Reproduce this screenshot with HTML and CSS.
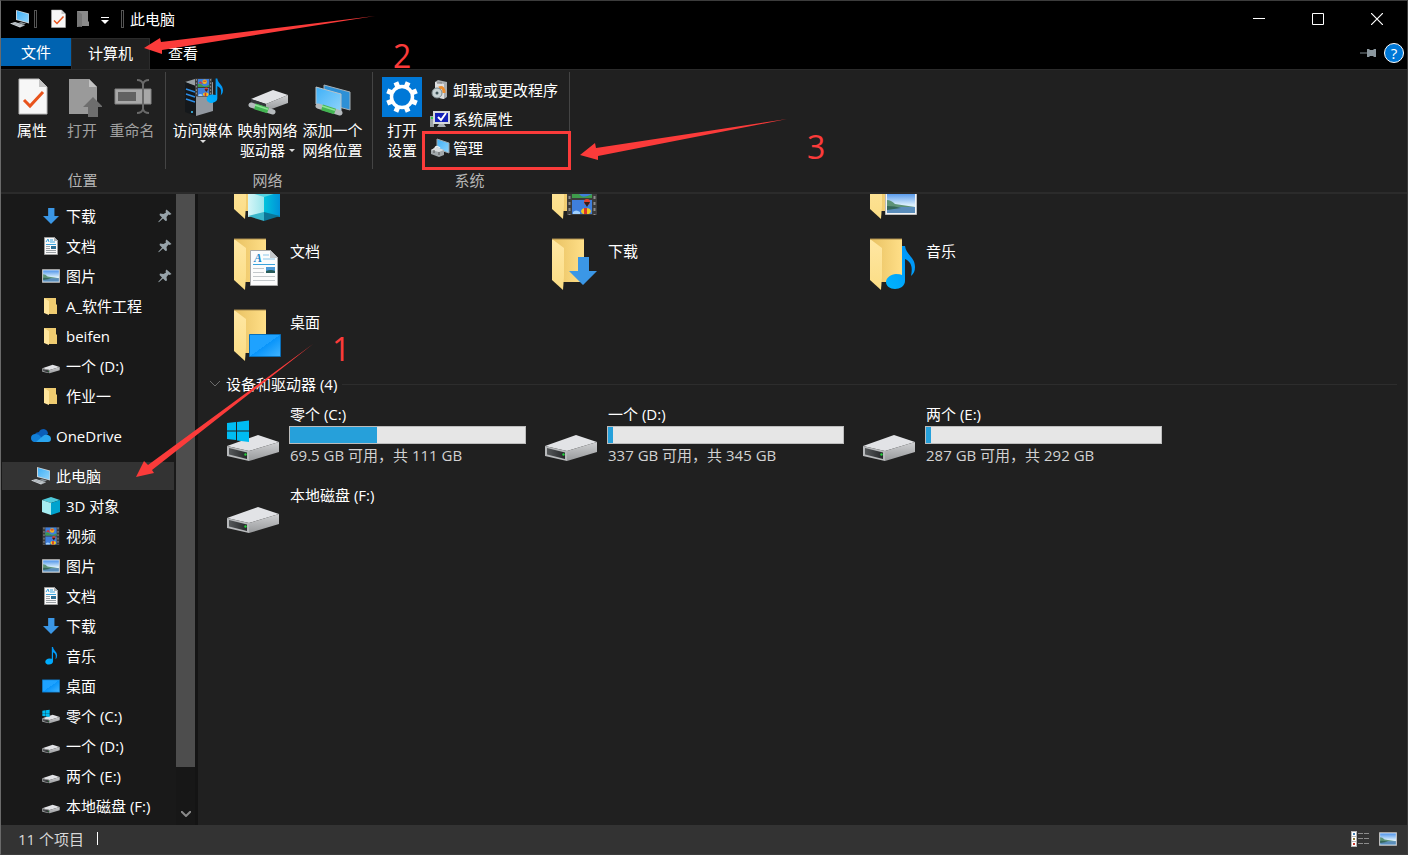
FILE: index.html
```
<!DOCTYPE html>
<html lang="zh-CN">

<head>
    <meta charset="UTF-8">
    <meta name="viewport" content="width=device-width, initial-scale=1.0">
    <title>此电脑</title>
    <link rel="stylesheet" href="styles.css">
</head>

<body>
    <!-- shared icons -->
    <svg class="sprite" aria-hidden="true">
        <defs>
            <linearGradient id="gScreen" x1="0" y1="0" x2="1" y2="1">
                <stop offset="0" stop-color="#3fb0f7" />
                <stop offset="1" stop-color="#8fd3fb" />
            </linearGradient>
            <linearGradient id="gBack" x1="0" y1="0" x2="1" y2="0">
                <stop offset="0" stop-color="#e8c162" />
                <stop offset="1" stop-color="#ffdf88" />
            </linearGradient>
            <linearGradient id="gFlap" x1="0" y1="0" x2="0" y2="1">
                <stop offset="0" stop-color="#ffe7a3" />
                <stop offset="1" stop-color="#fbdd85" />
            </linearGradient>
            <linearGradient id="gDesk" x1="0" y1="0" x2="1" y2="1">
                <stop offset="0.5" stop-color="#1ea2ff" />
                <stop offset="0.5" stop-color="#0894fa" />
                <stop offset="1" stop-color="#41b4ff" />
            </linearGradient>
            <linearGradient id="gSky" x1="0" y1="0" x2="0" y2="1">
                <stop offset="0" stop-color="#4f94ea" />
                <stop offset="0.6" stop-color="#dbeffc" />
                <stop offset="1" stop-color="#dbeffc" />
            </linearGradient>
            <linearGradient id="gNote" x1="0" y1="1" x2="1" y2="0">
                <stop offset="0" stop-color="#00b4ff" />
                <stop offset="1" stop-color="#0090f5" />
            </linearGradient>
            <linearGradient id="gDark" x1="0" y1="0" x2="1" y2="0">
                <stop offset="0" stop-color="#55585a" />
                <stop offset="1" stop-color="#26282a" />
            </linearGradient>
            <linearGradient id="gSide" x1="0" y1="0" x2="0" y2="1">
                <stop offset="0" stop-color="#cfd0d2" />
                <stop offset="1" stop-color="#97999b" />
            </linearGradient>
            <linearGradient id="gCubeL" x1="0" y1="0" x2="1" y2="0">
                <stop offset="0" stop-color="#d6f6f8" />
                <stop offset="1" stop-color="#9be6ec" />
            </linearGradient>
            <linearGradient id="gCubeR" x1="0" y1="0" x2="1" y2="0">
                <stop offset="0" stop-color="#00c3dd" />
                <stop offset="1" stop-color="#0091d8" />
            </linearGradient>
        </defs>

        <symbol id="pc" viewBox="0 0 20 20">
            <path d="M6 1l13 3.500v10L6 11z" fill="#c9d2d8" />
            <path d="M7 2l11.500 3.200v8.300L7 10.300z" fill="url(#gScreen)" />
            <path d="M11 13l5 1.500-2 1-6-1.500z" fill="#8b959b" />
            <path d="M0 14.500l5-1.500 10 3.200-5 2.300z" fill="#d7dce0" />
            <path d="M2 14.500l10 3M4 13.800l10 3" stroke="#7d868c" stroke-width=".5" />
        </symbol>

        <symbol id="check-page" viewBox="0 0 40 40">
            <path d="M7 2h20l8 8v27H7z" fill="#f7f7f7" stroke="#b9b9b9" />
            <path d="M27 2v8h8z" fill="#c5c5c5" />
            <path d="M12 23l6 6 13-14" fill="none" stroke="#e8531c" stroke-width="3" />
        </symbol>

        <symbol id="open-page" viewBox="0 0 40 40">
            <path d="M7 2h20l8 8v27H7z" fill="#9a9a9a" />
            <path d="M27 2v8h8z" fill="#c2c2c2" />
            <path d="M31 20l10 10h-5v10H26V30h-5z" fill="#6e6e6e" />
        </symbol>

        <symbol id="rename" viewBox="0 0 40 40">
            <path d="M3 12h36v15H3z" fill="#a8a8a8" stroke="#838383" />
            <path d="M6 15h18v9H6z" fill="#626262" />
            <path d="M31 6v27M25 3q5 0 6 4q1-4 6-4M25 36q5 0 6-4q1 4 6 4" fill="none" stroke="#6a6a6a" stroke-width="2" />
        </symbol>

        <symbol id="folder-gray" viewBox="0 0 14 18">
            <path d="M1 1h11v10l1 1v4H6L1 17z" fill="#8a8a8a" />
            <path d="M1 1l5 3v13l-5-1z" fill="#787878" />
        </symbol>

        <symbol id="film" viewBox="0 0 30 32">
            <path d="M0 0h30v32H0z" fill="#3b3b3b" />
            <path d="M2.500 1v31M27.500 1v31" stroke="#8c8c8c" stroke-width="2" stroke-dasharray="3 3" />
            <path d="M5 1h20v14H5zM5 17h20v14H5z" fill="#3f7fdc" />
            <path d="M5 10q5-2 8 2t12-1v4H5z" fill="#3f9b4b" />
            <circle cx="17" cy="6" r="4" fill="#f2b51d" />
            <path d="M14 4h6l-1 2h-4zM6 8l4-3 4 5z" fill="#d23b3b" />
            <circle cx="20" cy="19" r="3" fill="#e4402c" />
            <path d="M17 19h6l-3 5z" fill="#31201f" />
            <path d="M14 29q0-4 5-4t5 4l-2 2h-6z" fill="#f0c91f" />
            <path d="M17 25h3v6h-3z" fill="#d9362a" />
            <path d="M6 29q3-3 7 0v2H6z" fill="#9fd0ff" />
        </symbol>

        <symbol id="note" viewBox="0 0 30 44">
            <path d="M17 0h3c1 9 10 11 10 21q0 6-4 9c2-10 0-14-6-17v22c0 5-5 8-10 8S1 40 1 36s5-8 10-8q4 0 6 1z" fill="url(#gNote)" />
        </symbol>

        <symbol id="photo" viewBox="0 0 32 24">
            <path d="M.5.5h31v23H.5z" fill="#f4f4f4" stroke="#bdbdbd" />
            <path d="M2 2h28v20H2z" fill="url(#gSky)" />
            <path d="M2 9q4 0 8 4l20 3v1H2z" fill="#5d9377" />
            <path d="M2 16h28v6H2z" fill="#5a8dba" />
            <path d="M2 15q8 0 14 2l-14 2z" fill="#34675a" />
        </symbol>

        <symbol id="doc" viewBox="0 0 28 36">
            <path d="M.5.5h20l7 7v28H.5z" fill="#fcfcfc" stroke="#a9a9a9" />
            <path d="M20 0v8h8z" fill="#c4c8cb" />
            <text x="4" y="12" class="doc-letter">A</text>
            <path d="M13 5h6M13 9h12" stroke="#8cc8ea" />
            <path d="M3 14.500h22" stroke="#3ba3dc" />
            <path d="M3 18.500h11M3 22.500h11M3 26.500h22M3 30.500h22" stroke="#c3c8cb" />
            <path d="M16 17h9v6h-9z" fill="#4d9ad6" />
            <path d="M16 21q5-2 9 0v2h-9z" fill="#265a58" />
        </symbol>

        <symbol id="doc-small" viewBox="0 0 18 18">
            <path d="M2.500.5h10l3 3v14h-13z" fill="#fafafa" stroke="#9d9d9d" />
            <path d="M12 0v4h4z" fill="#aeb3b6" />
            <path d="M4 5l2-3 1 3M8 3h3M8 5h5M4 7.500h10" fill="none" stroke="#3ba3dc" />
            <path d="M4 9.500h4M4 11.500h4M4 13.500h10M4 15.500h10" stroke="#9aa0a4" />
            <path d="M9 9h5v3H9z" fill="#2d6f94" />
        </symbol>

        <symbol id="arrow-down" viewBox="0 0 28 28">
            <path d="M9 0h11v14h8L14 28 0 14h9z" fill="#3b97e6" />
        </symbol>

        <symbol id="desk" viewBox="0 0 32 23">
            <path d="M.5.5h31v22H.5z" fill="url(#gDesk)" stroke="#0a6fb8" />
        </symbol>

        <symbol id="cube" viewBox="0 0 32 34">
            <path d="M0 5l16-5v27L0 30z" fill="url(#gCubeL)" />
            <path d="M16 0l16 5v25l-16-3z" fill="url(#gCubeR)" />
            <path d="M0 5l16-5 16 5-16 5z" fill="#54d3e2" />
            <path d="M0 29l16-4v9z" fill="#39b5c9" />
            <path d="M32 29l-16-4v9z" fill="#0b7597" />
        </symbol>

        <symbol id="cube-small" viewBox="0 0 18 18">
            <path d="M9 0l9 3-9 3-9-3z" fill="#4fc9da" />
            <path d="M0 3l9 3v12l-9-3z" fill="#a6edf1" />
            <path d="M18 3L9 6v12l9-3z" fill="#00a3cf" />
        </symbol>

        <symbol id="folder" viewBox="0 0 56 56">
            <path d="M9 3h32v43H20z" fill="url(#gBack)" />
            <path d="M9 3l12 9v28l-1 14L9 44z" fill="url(#gFlap)" />
            <path d="M9 3h32" stroke="#a98b4c" />
        </symbol>

        <symbol id="folder-small" viewBox="0 0 18 18">
            <path d="M2 1h12v6l1 1v9H6z" fill="#eecb70" />
            <path d="M2 1l5 3v14l-5-2z" fill="#ffe59c" />
        </symbol>

        <symbol id="drive" viewBox="0 0 56 56">
            <path d="M2 38l31-11 21 7-30 9z" fill="#e2e3e6" />
            <path d="M24 43l30-9v10l-30 9z" fill="url(#gSide)" />
            <path d="M2 38l22 5v10L2 48z" fill="#b7b9bb" />
            <path d="M4 40l18 4.500v6.500L4 46.500z" fill="url(#gDark)" />
            <circle cx="20.500" cy="46.500" r="1.200" fill="#22d33a" />
        </symbol>

        <symbol id="winlogo" viewBox="0 0 56 56">
            <path d="M2 15l9-1v8.500H2zM12 14l12-1.500v10H12zM2 23.500h9V32l-9-1zM12 23.500h12V34l-12-1.500z" fill="#00bcf2" />
        </symbol>

        <symbol id="cloud" viewBox="0 0 20 14">
            <path d="M3 6q2-3 5-3 1-3 5-3 4 1 4 5l-8 5z" fill="#0a5db8" />
            <path d="M3 13q-3-1-3-4 0-4 5-4 3 0 5 3l4 5z" fill="#1280d8" />
            <path d="M5 13l7-6q2-2 5-1 3 1 3 4t-3 3z" fill="#2aa5ee" />
        </symbol>

        <symbol id="pin" viewBox="0 0 14 14">
            <path d="M8.500.5l5 4.500-2 1-1-.5-2 2.500.5 3.500-1.500.5L5 9.500.8 13.300l-.5-.5L4 8.500 1.500 6l.5-1.500 3.500.5L8 3.500 7.500 2z" fill="#97a3aa" />
        </symbol>

        <symbol id="server" viewBox="0 0 40 40">
            <path d="M2 5l10-3 12 5-11 3z" fill="#9aa1a6" />
            <path d="M2 5l11 4v30L2 35z" fill="#15181b" />
            <path d="M13 9l17-4v29l-17 5z" fill="#9298a0" />
            <path d="M3 12l9 3M3 17l9 3M3 22l9 3" stroke="#2c8de6" stroke-width="1.500" />
            <circle cx="9" cy="35" r="1" fill="#3fc8ff" />
        </symbol>

        <symbol id="pipe" viewBox="0 0 28 14">
            <path d="M3 3l22 7" stroke="#b5babd" stroke-width="5" stroke-linecap="round" />
            <path d="M7 4.300l13 4.200" stroke="#43b552" stroke-width="6" />
            <path d="M7 3l13 4.200" stroke="#8de496" stroke-width="1.500" />
        </symbol>

        <symbol id="net-drive" viewBox="0 0 40 40">
            <path d="M3 22l22-9 15 5-22 9z" fill="#e2e3e6" />
            <path d="M18 27l22-9v8l-22 8z" fill="url(#gSide)" />
            <path d="M3 22l15 5v7L3 29z" fill="#34373a" />
            <circle cx="15" cy="30" r="1" fill="#22d33a" />
            <use href="#pipe" x="0" y="25" width="28" height="14" />
        </symbol>

        <symbol id="add-place" viewBox="0 0 40 40">
            <path d="M11 8l26 7v18l-26-7z" fill="#2d90d6" stroke="#a7b1b7" />
            <path d="M3 10l25 7v17L3 27z" fill="url(#gScreen)" stroke="#b9c2c7" />
            <use href="#pipe" x="2" y="26" width="28" height="14" />
        </symbol>

        <symbol id="gear" viewBox="0 0 40 40">
            <path d="M0 0h40v40H0z" fill="#0078d7" />
            <circle cx="20" cy="20" r="10.500" fill="none" stroke="#fff" stroke-width="3.500" />
            <g stroke="#fff" stroke-width="5" transform="rotate(22.500 20 20)">
                <path d="M20 4v6M20 30v6M4 20h6M30 20h6" />
                <path d="M20 4v6M20 30v6M4 20h6M30 20h6" transform="rotate(45 20 20)" />
            </g>
        </symbol>

        <symbol id="programs" viewBox="0 0 20 20">
            <path d="M5 2l3-2 9 2v15l-3 2-9-2z" fill="#a9adb0" />
            <path d="M5 2l9 2v15l-9-2z" fill="#dedfe0" />
            <path d="M9 8q5-2 5 5" fill="none" stroke="#ee8f2f" stroke-width="3" />
            <circle cx="7" cy="13" r="5" fill="#c8d3d5" stroke="#7c898c" />
            <circle cx="7" cy="13" r="1.500" fill="#3d5256" />
            <path d="M7 3h5" stroke="#777" />
        </symbol>

        <symbol id="sysprops" viewBox="0 0 20 20">
            <path d="M0 7h4v11H0z" fill="#9da3a6" />
            <path d="M1 8h2v2H1z" fill="#35c94b" />
            <path d="M3 2h17v13H3z" fill="#d6d9da" />
            <path d="M5 4h13v9H5z" fill="#1220b8" />
            <path d="M8 8l3 3 5-7" fill="none" stroke="#fff" stroke-width="2" />
            <path d="M9 15h5l2 3H7z" fill="#abb0b3" />
        </symbol>

        <symbol id="manage" viewBox="0 0 20 20">
            <path d="M7 1l12 4v10L7 11z" fill="url(#gScreen)" stroke="#9ca8af" />
            <path d="M1 12l5-3 8 3v5l-5 2-8-3z" fill="#a1a7aa" />
            <path d="M1 12l5-3 8 3-5 2z" fill="#dadddf" />
            <path d="M5 10q1-3 5 0" fill="none" stroke="#eceff0" stroke-width="1.500" />
            <path d="M4 12v3M9 14v3" stroke="#555" />
        </symbol>
    </svg>

    <div class="window">
        <header class="titlebar">
            <svg class="icon20"><use href="#pc" /></svg>
            <span class="bar"></span>
            <button class="quick" aria-label="属性"><svg class="icon20"><use href="#check-page" /></svg></button>
            <button class="quick quick-folder" aria-label="新建文件夹"><svg width="14" height="18"><use href="#folder-gray" /></svg></button>
            <button class="quick quick-more" aria-label="自定义快速访问工具栏">
                <svg width="8" height="8" viewBox="0 0 8 8"><path d="M0 0h8v1H0zM0 3h8L4 7z" fill="#fff" /></svg>
            </button>
            <span class="bar"></span>
            <h1>此电脑</h1>
            <div class="controls">
                <button aria-label="最小化"><svg width="12" height="12" viewBox="0 0 12 12"><path d="M0 5.500h12" stroke="#fff" /></svg></button>
                <button aria-label="最大化"><svg width="12" height="12" viewBox="0 0 12 12"><path d="M.5.5h11v11H.5z" fill="none" stroke="#fff" /></svg></button>
                <button aria-label="关闭"><svg width="12" height="12" viewBox="0 0 12 12"><path d="M0 0l12 12M12 0L0 12" stroke="#fff" stroke-width="1.200" /></svg></button>
            </div>
        </header>

        <nav class="tabs">
            <button class="tab tab-file">文件</button>
            <button class="tab tab-active">计算机</button>
            <button class="tab">查看</button>
            <div class="tabs-right">
                <button aria-label="固定功能区"><svg width="16" height="10" viewBox="0 0 16 10"><path d="M0 5h7" stroke="#7f8a90" /><path d="M7 1h2l1 1h3l1-1h2v8h-2l-1-1h-3L9 9H7z" fill="#8b979e" /></svg></button>
                <button class="help" aria-label="帮助">?</button>
            </div>
        </nav>

        <section class="ribbon">
            <div class="group group-place">
                <div class="group-items">
                    <button class="big"><svg class="icon40"><use href="#check-page" /></svg><span>属性</span></button>
                    <button class="big muted"><svg class="icon40"><use href="#open-page" /></svg><span>打开</span></button>
                    <button class="big muted"><svg class="icon40"><use href="#rename" /></svg><span>重命名</span></button>
                </div>
                <div class="group-name">位置</div>
            </div>
            <div class="group group-net">
                <div class="group-items">
                    <button class="big wide">
                        <svg class="icon40" viewBox="0 0 40 40">
                            <use href="#server" width="40" height="40" />
                            <use href="#film" x="12" y="1" width="17" height="19" />
                            <use href="#note" x="23" y="1" width="17" height="26" />
                        </svg>
                        <span>访问媒体</span><i class="caret"></i>
                    </button>
                    <button class="big wide"><svg class="icon40"><use href="#net-drive" /></svg><span>映射网络</span><span class="with-caret">驱动器<i class="caret"></i></span></button>
                    <button class="big wide"><svg class="icon40"><use href="#add-place" /></svg><span>添加一个</span><span>网络位置</span></button>
                </div>
                <div class="group-name">网络</div>
            </div>
            <div class="group group-sys">
                <div class="group-items">
                    <button class="big"><svg class="icon40"><use href="#gear" /></svg><span>打开</span><span>设置</span></button>
                    <div class="small-list">
                        <button><svg class="icon20"><use href="#programs" /></svg>卸载或更改程序</button>
                        <button><svg class="icon20"><use href="#sysprops" /></svg>系统属性</button>
                        <button><svg class="icon20"><use href="#manage" /></svg>管理</button>
                    </div>
                </div>
                <div class="group-name">系统</div>
            </div>
        </section>

        <div class="body">
            <aside class="sidebar">
                <ul class="tree">
                    <li><a href="#"><svg class="icon18"><use href="#arrow-down" x="1" y="1" width="16" height="16" /></svg>下载<svg class="pin"><use href="#pin" /></svg></a></li>
                    <li><a href="#"><svg class="icon18"><use href="#doc-small" /></svg>文档<svg class="pin"><use href="#pin" /></svg></a></li>
                    <li><a href="#"><svg class="icon18"><use href="#photo" /></svg>图片<svg class="pin"><use href="#pin" /></svg></a></li>
                    <li><a href="#"><svg class="icon18"><use href="#folder-small" /></svg>A_软件工程</a></li>
                    <li><a href="#"><svg class="icon18"><use href="#folder-small" /></svg>beifen</a></li>
                    <li><a href="#"><svg class="icon18" viewBox="1 4 54 54"><use href="#drive" width="56" height="56" /></svg>一个 (D:)</a></li>
                    <li><a href="#"><svg class="icon18"><use href="#folder-small" /></svg>作业一</a></li>
                    <li class="root"><a href="#"><svg class="icon20"><use href="#cloud" /></svg>OneDrive</a></li>
                    <li class="root selected"><a href="#"><svg class="icon20"><use href="#pc" /></svg>此电脑</a></li>
                    <li><a href="#"><svg class="icon18"><use href="#cube-small" /></svg>3D 对象</a></li>
                    <li><a href="#"><svg class="icon18"><use href="#film" /></svg>视频</a></li>
                    <li><a href="#"><svg class="icon18"><use href="#photo" /></svg>图片</a></li>
                    <li><a href="#"><svg class="icon18"><use href="#doc-small" /></svg>文档</a></li>
                    <li><a href="#"><svg class="icon18"><use href="#arrow-down" x="1" y="1" width="16" height="16" /></svg>下载</a></li>
                    <li><a href="#"><svg class="icon18"><use href="#note" /></svg>音乐</a></li>
                    <li><a href="#"><svg class="icon18"><use href="#desk" /></svg>桌面</a></li>
                    <li><a href="#"><svg class="icon18" viewBox="1 4 54 54"><use href="#drive" width="56" height="56" /><use href="#winlogo" width="56" height="56" /></svg>零个 (C:)</a></li>
                    <li><a href="#"><svg class="icon18" viewBox="1 4 54 54"><use href="#drive" width="56" height="56" /></svg>一个 (D:)</a></li>
                    <li><a href="#"><svg class="icon18" viewBox="1 4 54 54"><use href="#drive" width="56" height="56" /></svg>两个 (E:)</a></li>
                    <li><a href="#"><svg class="icon18" viewBox="1 4 54 54"><use href="#drive" width="56" height="56" /></svg>本地磁盘 (F:)</a></li>
                </ul>
                <div class="scrollbar">
                    <div class="thumb"></div>
                    <svg width="10" height="6" viewBox="0 0 10 6"><path d="M0 0l5 5 5-5" fill="none" stroke="#8a8a8a" stroke-width="2" /></svg>
                </div>
            </aside>

            <main class="content">
                <div class="tiles folders">
                    <a href="#" class="tile" aria-label="3D 对象">
                        <svg class="icon56" viewBox="0 0 56 56"><use href="#folder" width="56" height="56" /><use href="#cube" x="23" y="22" width="32" height="34" /></svg>
                    </a>
                    <a href="#" class="tile" aria-label="视频">
                        <svg class="icon56" viewBox="0 0 56 56"><use href="#folder" width="56" height="56" /><use href="#film" x="24" y="18" width="30" height="32" /></svg>
                    </a>
                    <a href="#" class="tile" aria-label="图片">
                        <svg class="icon56" viewBox="0 0 56 56"><use href="#folder" width="56" height="56" /><use href="#photo" x="24" y="26" width="32" height="24" /></svg>
                    </a>
                    <a href="#" class="tile">
                        <svg class="icon56" viewBox="0 0 56 56"><use href="#folder" width="56" height="56" /><use href="#doc" x="25" y="14" width="28" height="36" /></svg>
                        <span class="name">文档</span>
                    </a>
                    <a href="#" class="tile">
                        <svg class="icon56" viewBox="0 0 56 56"><use href="#folder" width="56" height="56" /><use href="#arrow-down" x="26" y="21" width="28" height="28" /></svg>
                        <span class="name">下载</span>
                    </a>
                    <a href="#" class="tile">
                        <svg class="icon56" viewBox="0 0 56 56"><use href="#folder" width="56" height="56" /><use href="#note" x="24" y="10" width="30" height="44" /></svg>
                        <span class="name">音乐</span>
                    </a>
                    <a href="#" class="tile">
                        <svg class="icon56" viewBox="0 0 56 56"><use href="#folder" width="56" height="56" /><use href="#desk" x="24" y="27" width="32" height="23" /></svg>
                        <span class="name">桌面</span>
                    </a>
                </div>

                <h2 class="section">
                    <svg width="12" height="8" viewBox="0 0 12 8"><path d="M1 1l5 5 5-5" fill="none" stroke="#6b6b6b" /></svg>
                    设备和驱动器 (4)
                </h2>

                <div class="tiles drives">
                    <a href="#" class="tile drive">
                        <svg class="icon56" viewBox="0 0 56 56"><use href="#drive" width="56" height="56" /><use href="#winlogo" width="56" height="56" /></svg>
                        <span class="info">
                            <span class="name">零个 (C:)</span>
                            <span class="usage"><span class="used" style="width: 37%"></span></span>
                            <span class="free">69.5 GB 可用，共 111 GB</span>
                        </span>
                    </a>
                    <a href="#" class="tile drive">
                        <svg class="icon56" viewBox="0 0 56 56"><use href="#drive" width="56" height="56" /></svg>
                        <span class="info">
                            <span class="name">一个 (D:)</span>
                            <span class="usage"><span class="used" style="width: 2%"></span></span>
                            <span class="free">337 GB 可用，共 345 GB</span>
                        </span>
                    </a>
                    <a href="#" class="tile drive">
                        <svg class="icon56" viewBox="0 0 56 56"><use href="#drive" width="56" height="56" /></svg>
                        <span class="info">
                            <span class="name">两个 (E:)</span>
                            <span class="usage"><span class="used" style="width: 2%"></span></span>
                            <span class="free">287 GB 可用，共 292 GB</span>
                        </span>
                    </a>
                    <a href="#" class="tile">
                        <svg class="icon56" viewBox="0 0 56 56"><use href="#drive" width="56" height="56" /></svg>
                        <span class="name">本地磁盘 (F:)</span>
                    </a>
                </div>
            </main>
        </div>

        <footer class="status">
            <span class="count">11 个项目</span>
            <div class="views">
                <button aria-label="详细信息">
                    <svg width="18" height="16" viewBox="0 0 18 16">
                        <path d="M0 0h6v16H0z" fill="#b5b5b5" />
                        <path d="M1 1h4v4H1zM1 6h4v4H1zM1 11h4v4H1z" fill="#fff" />
                        <path d="M2 2h2v2H2z" fill="#3f7fb5" />
                        <path d="M2 7h2v2H2z" fill="#8a7a3a" />
                        <path d="M2 12h2v2H2z" fill="#c9392b" />
                        <path d="M7 2.500h5M13 2.500h5M7 7.500h5M13 7.500h5M7 12.500h5M13 12.500h5" stroke="#8c8c8c" />
                    </svg>
                </button>
                <button aria-label="大图标"><svg width="18" height="14"><use href="#photo" /></svg></button>
            </div>
        </footer>

        <!-- step marks -->
        <svg class="marks" width="840" height="500" viewBox="0 0 840 500">
            <g fill="#fb3b3a">
                <path d="M144 48l16-10 1 4L375 16 162 50v4z" />
                <path d="M136 477l8-16 4 4L313 344 152 470l2 3z" />
                <path d="M580 155l15-12 1 5L787 119 598 156v4z" />
                <text x="332" y="361">1</text>
                <text x="393" y="68">2</text>
                <text x="807" y="159">3</text>
            </g>
            <rect x="423.500" y="132.500" width="146" height="36" fill="none" stroke="#fb3b3a" stroke-width="3" />
        </svg>
    </div>
</body>

</html>
```
FILE: styles.css
```
* {
    box-sizing: border-box;
}

body {
    margin: 0;
    background-color: #202020;
    color: #fff;
    font-family: "Open Sans", "Noto Sans CJK SC", sans-serif;
    font-size: 15px;
    line-height: 20px;
}

button {
    background: none;
    border: none;
    padding: 0;
    color: inherit;
    font: inherit;
}

a {
    color: inherit;
    text-decoration: none;
}

svg {
    display: block;
    flex-shrink: 0;
}

.sprite {
    position: absolute;
    width: 0;
    height: 0;
}

.doc-letter {
    font-family: "Liberation Serif", serif;
    font-size: 12px;
    font-style: italic;
    font-weight: bold;
    fill: #1b87c9;
}

.icon18 {
    width: 18px;
    height: 18px;
}

.icon20 {
    width: 20px;
    height: 20px;
}

.icon40 {
    width: 40px;
    height: 40px;
}

.icon56 {
    width: 56px;
    height: 56px;
}

.window {
    position: relative;
    display: flex;
    flex-direction: column;
    height: 100vh;
    border: 1px solid #3c3c3c;
    border-left-color: #6a6a6a;
    overflow: hidden;
}

/* title bar */
.titlebar {
    display: flex;
    align-items: center;
    height: 37px;
    padding: 0 1px 2px 9px;
    background-color: #000;
}

.titlebar h1 {
    margin: 0 0 0 6px;
    font-size: 15px;
    font-weight: normal;
}

.bar {
    width: 3px;
    height: 18px;
    margin-left: 4px;
    border: 1px solid #555;
}

.quick {
    margin-left: 11px;
}

.quick-folder {
    margin-left: 8px;
}

.quick-more {
    margin: 4px 8px 0 11px;
}

.controls {
    display: flex;
    align-self: stretch;
    margin-left: auto;
}

.controls button {
    display: flex;
    align-items: center;
    justify-content: center;
    width: 59px;
}

/* tabs */
.tabs {
    display: flex;
    height: 31px;
    background-color: #000;
}

.tab {
    width: 66px;
    padding-bottom: 2px;
}

.tab-file {
    width: 70px;
    height: 28px;
    padding-bottom: 0;
    background-color: #0063b1;
}

.tab-active {
    width: 79px;
    background-color: #202020;
    border: 1px solid #2b2b2b;
    border-bottom: none;
}

.tabs-right {
    display: flex;
    align-items: center;
    gap: 8px;
    margin-left: auto;
    padding: 0 3px 2px 0;
}

.help {
    width: 20px;
    height: 20px;
    border: 1px solid #fff;
    border-radius: 50%;
    background-color: #0078d7;
    line-height: 18px;
}

/* ribbon */
.ribbon {
    display: flex;
    height: 125px;
    border-top: 1px solid #2b2b2b;
    border-bottom: 2px solid #2b2b2b;
}

.group {
    display: flex;
    flex-direction: column;
    padding-top: 7px;
    background: linear-gradient(#444, #444) right 2px / 1px 97px no-repeat;
}

.group-place {
    width: 165px;
    padding-left: 6px;
}

.group-net {
    width: 207px;
    padding-left: 4px;
}

.group-sys {
    width: 197px;
    padding-left: 4px;
}

.group-items {
    display: flex;
    height: 93px;
}

.group-name {
    padding-right: 8px;
    color: #b4b4b4;
    text-align: center;
}

.big {
    display: flex;
    flex-direction: column;
    align-items: center;
    width: 50px;
}

.big svg {
    margin-bottom: 3px;
}

.wide {
    width: 65px;
}

.muted {
    color: #a0a0a0;
}

.caret {
    border: 3px solid transparent;
    border-top-color: #ddd;
    border-bottom: none;
}

.with-caret {
    display: flex;
    align-items: center;
    gap: 4px;
}

.small-list {
    display: flex;
    flex-direction: column;
    margin-top: -2px;
    padding-left: 3px;
}

.small-list button {
    display: flex;
    align-items: center;
    gap: 3px;
    height: 29px;
}

/* navigation pane */
.body {
    display: flex;
    flex: 1;
    min-height: 0;
}

.sidebar {
    display: flex;
    width: 197px;
    background-color: #191919;
    border-right: 3px solid #141414;
}

.tree {
    flex: 1;
    margin: 0;
    padding: 7px 2px 0 1px;
    list-style: none;
    overflow: hidden;
}

.tree a {
    display: flex;
    align-items: center;
    gap: 6px;
    height: 30px;
    padding-left: 40px;
}

.tree .root {
    margin-top: 10px;
}

.tree .root a {
    gap: 5px;
    padding-left: 29px;
}

.tree .selected {
    margin: 11px 0 1px;
    background-color: #333;
}

.tree .selected a {
    height: 28px;
}

.pin {
    width: 14px;
    height: 14px;
    margin: 0 2px 0 auto;
}

.scrollbar {
    display: flex;
    flex-direction: column;
    align-items: center;
    justify-content: space-between;
    width: 19px;
    padding-bottom: 8px;
    background-color: #171717;
}

.thumb {
    width: 100%;
    height: 92%;
    background-color: #4d4d4d;
}

/* file list */
.content {
    flex: 1;
    overflow: hidden;
}

.tiles {
    display: grid;
    grid-template-columns: repeat(auto-fill, 318px);
    grid-auto-rows: 71px;
    padding-left: 27px;
}

.folders {
    margin-top: -37px;
}

.drives {
    grid-auto-rows: 72px;
}

.tile {
    display: flex;
    gap: 8px;
    padding-top: 8px;
}

.tile .name {
    padding: 5px 0 0 1px;
}

.section {
    display: flex;
    align-items: center;
    gap: 5px;
    height: 30px;
    margin: 0;
    padding: 0 10px 2px 11px;
    font-size: 15px;
    font-weight: normal;
}

.section::after {
    content: "";
    flex: 1;
    height: 1px;
    background-color: #2d2d2d;
}

.drive {
    padding-top: 4px;
}

.drive .icon56 {
    margin-top: 4px;
}

.info {
    display: flex;
    flex-direction: column;
}

.tile .info .name {
    padding-top: 0;
}

.usage {
    width: 237px;
    height: 18px;
    margin: 2px 0 1px;
    border: 1px solid #bcbcbc;
    background-color: #e6e6e6;
}

.used {
    display: block;
    height: 100%;
    background-color: #26a0da;
}

.free {
    padding-left: 1px;
    color: #d2d2d2;
}

/* status bar */
.status {
    display: flex;
    align-items: center;
    justify-content: space-between;
    height: 29px;
    padding: 0 10px 2px 17px;
    background-color: #333;
    color: #d8d8d8;
}

.count {
    display: flex;
    align-items: center;
    gap: 13px;
}

.count::after {
    content: "";
    width: 1px;
    height: 13px;
    background-color: #fff;
}

.views {
    display: flex;
    align-items: center;
    gap: 10px;
}

.marks {
    position: absolute;
    top: -1px;
    left: -1px;
    pointer-events: none;
}

.marks text {
    font-size: 32px;
    font-weight: 500;
}
```
